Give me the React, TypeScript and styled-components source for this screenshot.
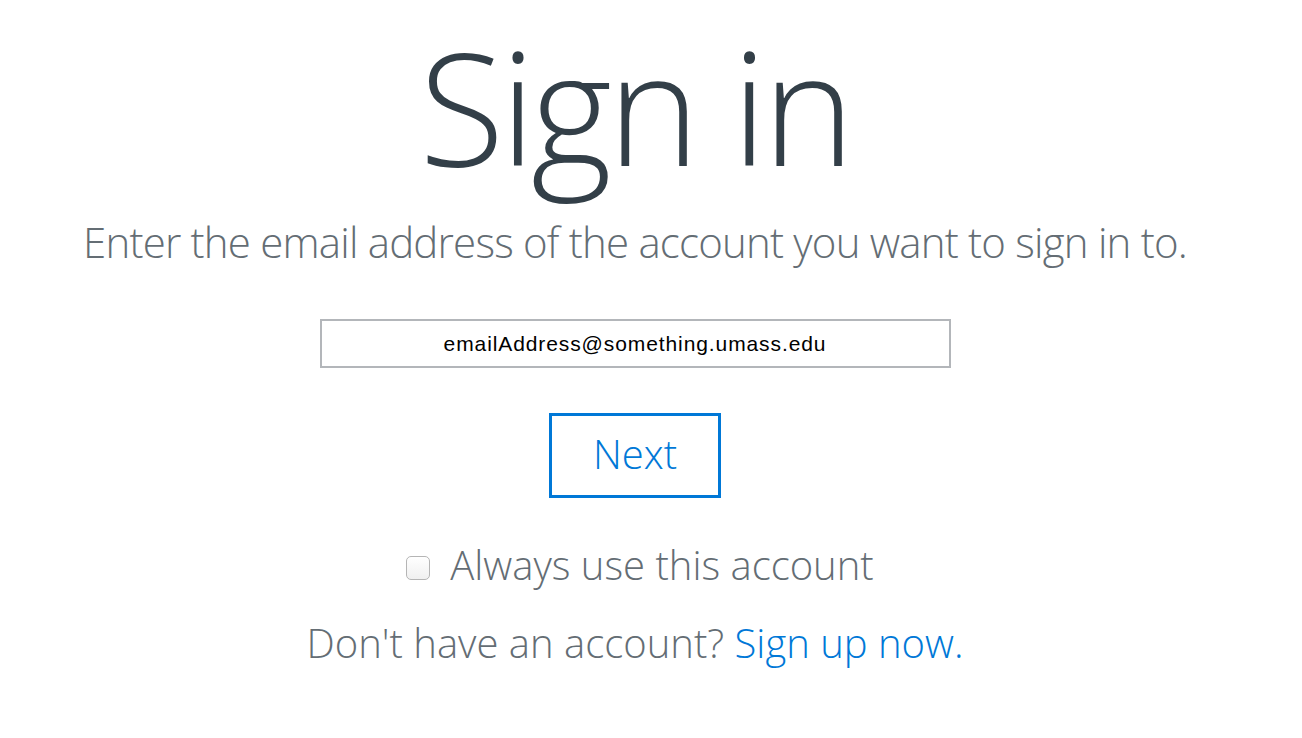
import React, { useState } from 'react';
import styled, { createGlobalStyle } from 'styled-components';

const GlobalStyle = createGlobalStyle`
  html, body {
    margin: 0;
    padding: 0;
    background: #ffffff;
  }
  body {
    font-family: "Open Sans", "Liberation Sans", sans-serif;
  }
`;

const Page = styled.div`
  display: flex;
  flex-direction: column;
  align-items: center;
  padding: 28px 32px 0 0;
`;

const Title = styled.h1`
  margin: 0;
  font-size: 156px;
  line-height: 156px;
  font-weight: 300;
  color: #333f48;
  letter-spacing: -4.3px;
`;

const Subtitle = styled.p`
  margin: 32px 0 0;
  font-size: 42px;
  line-height: 52px;
  font-weight: 300;
  color: #646d74;
  letter-spacing: -0.8px;
  white-space: nowrap;
`;

const EmailInput = styled.input`
  margin-top: 51px;
  box-sizing: border-box;
  width: 631px;
  height: 49px;
  border: 2px solid #b3b6ba;
  border-radius: 0;
  text-align: center;
  font-family: "Liberation Sans", Arial, sans-serif;
  font-size: 21px;
  letter-spacing: 0.9px;
  color: #000000;
  outline: none;
`;

const NextButton = styled.button`
  margin-top: 45px;
  box-sizing: border-box;
  width: 172px;
  height: 85px;
  border: 3px solid #0078d7;
  background: #ffffff;
  color: #0078d7;
  font-family: "Open Sans", sans-serif;
  font-weight: 300;
  font-size: 40px;
  padding: 0 0 4px;
  cursor: pointer;
`;

const CheckRow = styled.label`
  margin: 42px 0 0 10px;
  display: flex;
  align-items: center;
  gap: 20px;
  font-size: 40px;
  line-height: 50px;
  font-weight: 300;
  color: #646d74;
  cursor: pointer;
`;

const Box = styled.span<{ checked: boolean }>`
  box-sizing: border-box;
  width: 24px;
  height: 24px;
  margin-top: 6px;
  border: 1px solid #b5b5b5;
  border-radius: 5px;
  background: ${p => (p.checked ? '#0078d7' : 'linear-gradient(#ffffff, #f0f0f0)')};
`;

const SignUpLine = styled.p`
  margin: 28px 0 0;
  font-size: 40px;
  line-height: 50px;
  font-weight: 300;
  color: #646d74;
`;

const Link = styled.a`
  color: #0078d7;
  text-decoration: none;
`;

export default function App() {
  const [email, setEmail] = useState('emailAddress@something.umass.edu');
  const [always, setAlways] = useState(false);

  return (
    <>
      <GlobalStyle />
      <Page>
        <Title>Sign in</Title>
        <Subtitle>Enter the email address of the account you want to sign in to.</Subtitle>
        <EmailInput type="email" value={email} onChange={e => setEmail(e.target.value)} />
        <NextButton type="button">Next</NextButton>
        <CheckRow onClick={() => setAlways(!always)}>
          <Box checked={always} />
          Always use this account
        </CheckRow>
        <SignUpLine>
          Don't have an account? <Link href="#">Sign up now.</Link>
        </SignUpLine>
      </Page>
    </>
  );
}
